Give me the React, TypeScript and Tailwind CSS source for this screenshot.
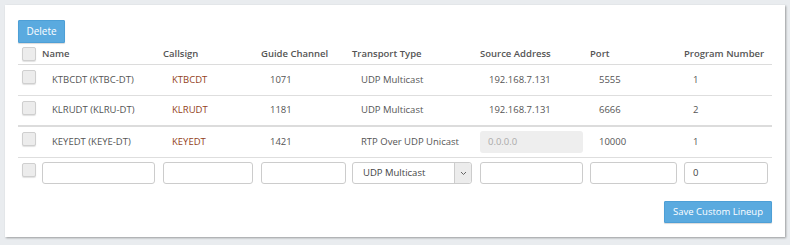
import React from "react";

const cols = "grid grid-cols-[24px_121px_98px_91px_128px_110px_94px_88px]";

function Check() {
  return (
    <div className="w-[14px] h-[14px] rounded-[2px] border border-[#cfcfcf] bg-[#ececec] shadow-[0_1px_1px_rgba(0,0,0,0.12)] ml-[4px]" />
  );
}

const rows = [
  { name: "KTBCDT (KTBC-DT)", call: "KTBCDT", guide: "1071", type: "UDP Multicast", src: "192.168.7.131", port: "5555", prog: "1", border: "border-b border-[#dedede]" },
  { name: "KLRUDT (KLRU-DT)", call: "KLRUDT", guide: "1181", type: "UDP Multicast", src: "192.168.7.131", port: "6666", prog: "2", border: "border-b-2 border-[#dcdcdc]" },
  { name: "KEYEDT (KEYE-DT)", call: "KEYEDT", guide: "1421", type: "RTP Over UDP Unicast", src: "", port: "10000", prog: "1", border: "border-b border-[#dedede]" },
];

function Input({ w, value }: { w: string; value?: string }) {
  return (
    <div className={`${w} h-[22px] rounded-[3px] border border-[#cccccc] bg-white flex items-center pl-[8px] text-[#444]`}>
      {value}
    </div>
  );
}

export default function App() {
  return (
    <div
      className="w-[790px] h-[245px] bg-[#e9ecef] pt-[5px] pl-[5px]"
      style={{ fontFamily: '"Open Sans", "Liberation Sans", sans-serif' }}
    >
      <div className="w-[780px] h-[232px] bg-white shadow-[1px_1px_2px_rgba(0,0,0,0.35)] pt-[15px] pl-[13px] pr-[13px] flex flex-col text-[9.5px] text-[#555]">
        <div>
          <button className="h-[23px] w-[47px] bg-[#5aaadf] border border-[#4d9fd6] text-white text-[10px] rounded-[1px] shadow-[0_1px_1px_rgba(0,0,0,0.15)]">
            Delete
          </button>
        </div>
        <div className={`${cols} mt-[4px] h-[18px] border-b border-[#dcdcdc] font-semibold text-[#555]`}>
          <div className="pt-0"><Check /></div>
          <div className="leading-[14px]">Name</div>
          <div className="leading-[14px]">Callsign</div>
          <div className="leading-[14px]">Guide Channel</div>
          <div className="leading-[14px]">Transport Type</div>
          <div className="leading-[14px]">Source Address</div>
          <div className="leading-[14px]">Port</div>
          <div className="leading-[14px]">Program Number</div>
        </div>
        {rows.map((r) => (
          <div key={r.name} className={`${cols} h-[31px] ${r.border}`}>
            <div className="pt-[5px]"><Check /></div>
            <div className="flex items-center pl-[10px]">{r.name}</div>
            <div className="flex items-center pl-[9px] text-[#933f22]">{r.call}</div>
            <div className="flex items-center pl-[9px]">{r.guide}</div>
            <div className="flex items-center pl-[9px]">{r.type}</div>
            <div className="flex items-center">
              {r.src ? (
                <span className="pl-[9px]">{r.src}</span>
              ) : (
                <div className="w-[103px] h-[22px] rounded-[3px] bg-[#eeeeee] flex items-center pl-[8px] text-[#aaa]">0.0.0.0</div>
              )}
            </div>
            <div className="flex items-center pl-[9px]">{r.port}</div>
            <div className="flex items-center pl-[9px]">{r.prog}</div>
          </div>
        ))}
        <div className={`${cols} pt-[4px]`}>
          <div className="pt-[1px]"><Check /></div>
          <div><Input w="w-[113px]" /></div>
          <div><Input w="w-[90px]" /></div>
          <div><Input w="w-[85px]" /></div>
          <div>
            <div className="w-[120px] h-[22px] rounded-[3px] border border-[#cccccc] flex">
              <div className="flex-1 flex items-center pl-[10px] text-[#444]">UDP Multicast</div>
              <div className="w-[17px] bg-[#ececec] border-l border-[#cccccc] flex items-center justify-center rounded-r-[3px]">
                <svg width="7" height="5" viewBox="0 0 7 5">
                  <path d="M1 1 L3.5 3.5 L6 1" stroke="#666" strokeWidth="1" fill="none" />
                </svg>
              </div>
            </div>
          </div>
          <div><Input w="w-[103px]" /></div>
          <div><Input w="w-[87px]" /></div>
          <div><Input w="w-[84px]" value="0" /></div>
        </div>
        <div className="flex justify-end mt-[17px]">
          <button className="h-[22px] w-[108px] bg-[#5aaadf] border border-[#4d9fd6] text-white text-[9.5px] rounded-[1px] shadow-[0_1px_1px_rgba(0,0,0,0.15)]">
            Save Custom Lineup
          </button>
        </div>
      </div>
    </div>
  );
}
